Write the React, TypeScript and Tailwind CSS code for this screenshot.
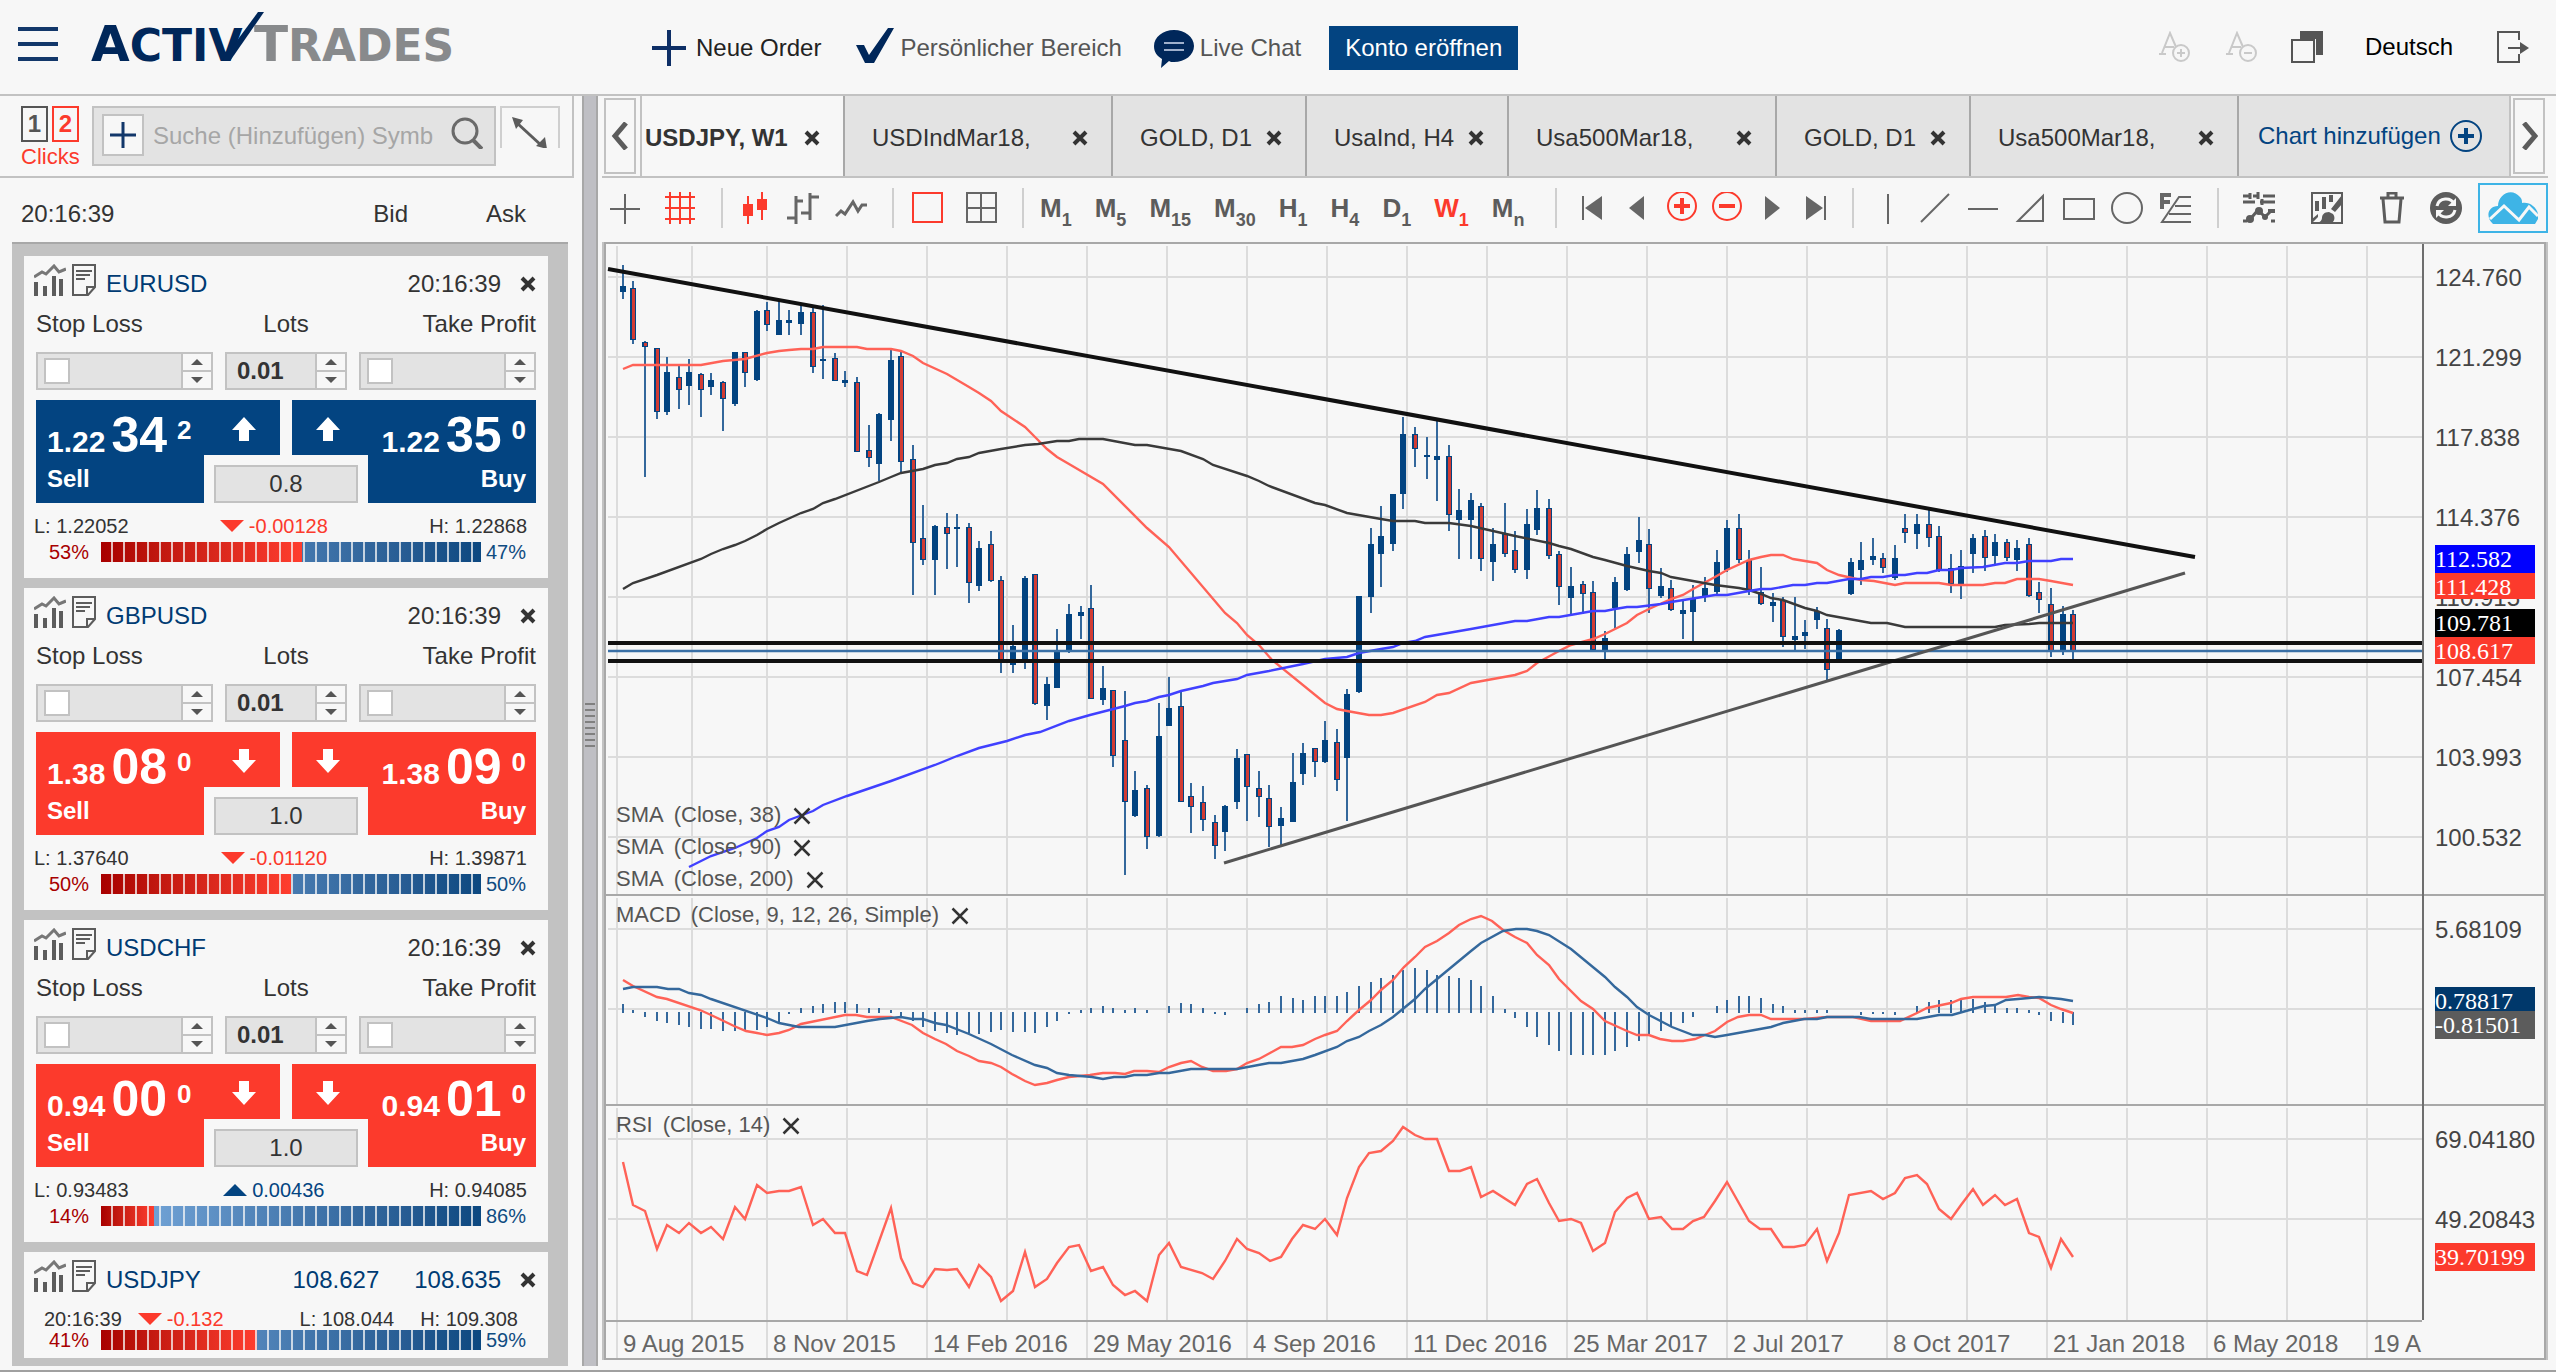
import type { ReactNode } from 'react'

type Pair = {
  symbol: string
  bid: [string, string, string]
  ask: [string, string, string]
  rising: boolean
  spread: string
  low: string
  high: string
  change: string
  changeUp: boolean
  sell: number
}

const pairs: Pair[] = [
  {
    symbol: 'EURUSD',
    bid: ['1.22', '34', '2'],
    ask: ['1.22', '35', '0'],
    rising: true,
    spread: '0.8',
    low: '1.22052',
    high: '1.22868',
    change: '-0.00128',
    changeUp: false,
    sell: 53
  },
  {
    symbol: 'GBPUSD',
    bid: ['1.38', '08', '0'],
    ask: ['1.38', '09', '0'],
    rising: false,
    spread: '1.0',
    low: '1.37640',
    high: '1.39871',
    change: '-0.01120',
    changeUp: false,
    sell: 50
  },
  {
    symbol: 'USDCHF',
    bid: ['0.94', '00', '0'],
    ask: ['0.94', '01', '0'],
    rising: false,
    spread: '1.0',
    low: '0.93483',
    high: '0.94085',
    change: '0.00436',
    changeUp: true,
    sell: 14
  }
]

const tabs = [
  { id: 1, title: 'USDJPY, W1', width: 'w-[205px]' },
  { id: 2, title: 'USDIndMar18,', width: 'w-[268px]' },
  { id: 3, title: 'GOLD, D1', width: 'w-[194px]' },
  { id: 4, title: 'UsaInd, H4', width: 'w-[202px]' },
  { id: 5, title: 'Usa500Mar18,', width: 'w-[268px]' },
  { id: 6, title: 'GOLD, D1', width: 'w-[194px]' },
  { id: 7, title: 'Usa500Mar18,', width: 'w-[268px]' }
]

const periods = [
  ['M', '1'],
  ['M', '5'],
  ['M', '15'],
  ['M', '30'],
  ['H', '1'],
  ['H', '4'],
  ['D', '1'],
  ['W', '1'],
  ['M', 'n']
]

// high, body top, body bottom, low, 1 = falling week
const candles = [
  [265, 286, 292, 299, 0], [281, 288, 340, 344, 1], [341, 342, 347, 477, 1], [348, 348, 412, 419, 1],
  [357, 372, 412, 415, 0], [365, 377, 390, 409, 1], [359, 372, 386, 405, 0], [373, 374, 390, 417, 1],
  [373, 380, 387, 395, 0], [381, 382, 399, 431, 1], [352, 352, 404, 406, 0], [352, 352, 373, 387, 1],
  [310, 311, 380, 381, 0], [302, 310, 325, 331, 1], [299, 320, 335, 335, 0], [310, 320, 323, 335, 0],
  [304, 312, 324, 335, 0], [307, 312, 367, 373, 1], [305, 359, 361, 379, 0], [353, 358, 381, 381, 1],
  [371, 380, 383, 387, 0], [377, 382, 452, 452, 1], [425, 450, 458, 467, 1], [413, 414, 464, 481, 0],
  [349, 360, 420, 441, 0], [352, 356, 462, 472, 1], [445, 459, 543, 595, 1], [505, 538, 560, 565, 1],
  [525, 526, 560, 595, 0], [513, 527, 534, 569, 1], [514, 527, 529, 567, 0], [523, 527, 583, 603, 1],
  [541, 548, 586, 591, 0], [531, 544, 581, 582, 1], [576, 580, 663, 673, 1], [625, 646, 665, 673, 0],
  [576, 578, 661, 669, 0], [574, 574, 704, 705, 1], [677, 684, 706, 720, 0], [629, 652, 688, 688, 0],
  [604, 614, 652, 653, 0], [606, 612, 616, 639, 0], [585, 608, 699, 699, 1], [666, 688, 700, 705, 0],
  [690, 690, 756, 767, 1], [691, 740, 802, 875, 1], [771, 790, 816, 817, 0], [785, 788, 837, 849, 1],
  [703, 736, 836, 837, 0], [677, 708, 726, 726, 0], [692, 706, 802, 802, 1], [783, 796, 807, 833, 1],
  [786, 802, 820, 831, 1], [815, 822, 846, 859, 1], [805, 806, 832, 851, 0], [749, 758, 802, 809, 0],
  [754, 754, 787, 821, 1], [771, 788, 797, 817, 1], [785, 798, 827, 847, 1], [807, 818, 826, 846, 0],
  [753, 782, 822, 822, 0], [743, 753, 774, 785, 0], [748, 748, 762, 777, 1], [721, 740, 762, 763, 0],
  [729, 742, 780, 791, 1], [689, 694, 758, 821, 0], [596, 596, 692, 693, 0], [528, 544, 597, 613, 0],
  [506, 536, 554, 587, 0], [494, 494, 544, 551, 0], [417, 434, 494, 509, 0], [427, 434, 449, 467, 1],
  [437, 455, 457, 479, 0], [420, 456, 460, 501, 0], [445, 456, 515, 531, 1], [489, 510, 520, 559, 0],
  [493, 500, 520, 559, 0], [503, 506, 559, 571, 1], [528, 544, 562, 581, 0], [503, 534, 554, 557, 1],
  [531, 550, 570, 573, 1], [509, 524, 570, 579, 0], [490, 508, 530, 535, 0], [499, 508, 556, 559, 1],
  [551, 554, 587, 605, 1], [567, 586, 598, 615, 0], [581, 584, 594, 614, 1], [581, 592, 650, 651, 1],
  [631, 638, 651, 661, 0], [577, 582, 608, 628, 0], [547, 554, 590, 591, 0], [517, 540, 552, 563, 0],
  [529, 544, 589, 613, 1], [568, 586, 596, 598, 0], [580, 588, 610, 611, 1], [600, 610, 614, 639, 0],
  [585, 598, 612, 644, 0], [577, 588, 597, 602, 0], [550, 562, 592, 594, 0], [520, 528, 570, 572, 0],
  [514, 528, 560, 563, 1], [550, 560, 591, 595, 1], [567, 592, 604, 605, 1], [593, 602, 606, 622, 0],
  [597, 600, 637, 647, 1], [597, 636, 640, 651, 0], [620, 632, 636, 649, 0], [607, 611, 620, 629, 0],
  [619, 628, 670, 681, 1], [629, 630, 661, 661, 0], [558, 562, 594, 595, 0], [542, 560, 570, 585, 0],
  [538, 556, 560, 565, 0], [553, 558, 568, 573, 1], [545, 558, 578, 580, 0], [514, 528, 533, 543, 1],
  [514, 524, 534, 549, 0], [509, 524, 538, 547, 1], [526, 536, 571, 572, 1], [554, 568, 584, 593, 1],
  [550, 566, 585, 599, 0], [534, 538, 554, 573, 0], [530, 536, 558, 571, 1], [534, 542, 556, 565, 0],
  [539, 542, 558, 561, 1], [540, 548, 560, 571, 0], [538, 544, 596, 597, 1], [582, 592, 600, 613, 1],
  [588, 604, 651, 657, 1], [606, 614, 651, 655, 0], [610, 614, 651, 662, 1]
]

const macdBars = [
  9, 3, -5, -9, -11, -13, -15, -17, -17, -19, -19, -18, -18, -15, -11, -2, 5, 7, 9, 11, 11, 9, 5, 5, 3, -4,
  -9, -15, -19, -21, -23, -21, -22, -20, -18, -20, -20, -21, -15, -9, -2, 3, 5, 7, 5, 3, 5, 3, 0, 7, 10, 9,
  5, -2, -3, 0, 5, 9, 11, 17, 15, 13, 17, 17, 17, 21, 27, 31, 35, 38, 43, 45, 43, 38, 37, 35, 33, 27, 17, 4,
  -6, -15, -25, -33, -39, -43, -43, -43, -43, -39, -35, -29, -22, -19, -15, -11, -5, 0, 7, 13, 17, 17, 15, 9,
  7, 3, 3, 3, 3, 0, 0, -3, -2, -2, -3, 0, 7, 11, 13, 13, 14, 14, 11, 9, 5, 5, 3, -3, -9, -11, -13
]

const sma38 =
  '623,369 633,365 701,365 723,361 745,359 767,353 779,351 789,350 801,349 813,349 823,347 857,347 867,349 891,349 901,351 913,356 923,363 947,374 969,387 979,393 991,401 1001,411 1025,427 1035,437 1047,449 1057,457 1069,464 1103,484 1147,528 1169,547 1225,613 1237,623 1247,635 1259,645 1272,660 1325,703 1337,709 1347,711 1369,715 1381,715 1393,713 1425,702 1437,695 1449,693 1471,683 1515,675 1527,671 1537,663 1559,651 1571,645 1593,639 1605,634 1627,623 1637,615 1649,609 1671,599 1683,595 1693,589 1715,577 1727,570 1749,560 1761,557 1771,555 1783,555 1793,559 1817,563 1827,570 1839,575 1861,580 1874,581 1895,585 1905,583 1939,583 1951,585 1983,585 1995,583 2005,583 2017,579 2039,579 2051,581 2073,585'
const sma90 =
  '623,589 633,583 657,575 701,559 711,554 723,549 735,545 745,541 757,535 767,529 779,523 801,513 813,509 823,503 835,499 879,482 891,477 901,473 923,469 935,465 947,463 957,459 969,457 979,453 1001,449 1025,445 1038,444 1057,441 1069,441 1079,439 1103,439 1135,445 1147,445 1181,451 1203,459 1213,465 1247,476 1259,481 1269,486 1315,503 1325,505 1347,513 1381,519 1393,521 1415,521 1425,523 1449,523 1471,526 1493,531 1515,536 1549,543 1559,546 1571,549 1593,557 1605,560 1627,566 1649,571 1661,573 1671,577 1715,585 1739,588 1749,590 1761,594 1771,598 1783,600 1805,608 1817,611 1827,615 1871,623 1887,623 1905,627 1995,627 2005,625 2029,624 2039,623 2073,623'
const sma200 =
  '689,867 711,856 735,848 757,838 767,831 779,827 789,820 813,811 823,805 847,796 891,781 935,765 957,756 979,748 991,745 1007,741 1025,735 1040,732 1069,721 1090,715 1125,706 1135,703 1147,701 1159,697 1169,695 1181,691 1203,686 1213,683 1237,679 1247,675 1269,671 1303,664 1325,659 1347,657 1359,653 1381,649 1393,647 1403,643 1415,641 1425,637 1471,629 1515,621 1527,621 1549,617 1559,617 1593,611 1605,611 1615,609 1627,607 1637,607 1661,604 1671,602 1715,595 1727,595 1749,591 1761,589 1771,589 1793,585 1805,585 1817,583 1827,583 1849,579 1861,579 1871,577 1883,577 1895,575 1905,575 1917,573 1927,573 1939,570 1951,570 1961,568 1983,567 2005,563 2017,563 2029,561 2051,561 2061,559 2073,559'
const macdFast =
  '623,980 633,986 657,997 667,999 700,1010 711,1015 734,1026 746,1031 757,1033 767,1035 779,1033 789,1030 801,1024 845,1015 856,1015 867,1017 891,1017 912,1025 923,1033 935,1039 946,1044 957,1051 969,1056 979,1061 991,1063 1001,1067 1012,1074 1025,1081 1035,1085 1047,1083 1057,1080 1069,1077 1090,1075 1103,1073 1115,1073 1125,1074 1134,1071 1147,1071 1159,1072 1169,1067 1181,1063 1191,1061 1202,1067 1213,1071 1226,1071 1237,1069 1247,1063 1259,1059 1270,1053 1281,1047 1292,1047 1303,1045 1315,1039 1325,1035 1337,1031 1347,1021 1359,1010 1371,1000 1381,990 1393,980 1404,967 1415,957 1425,947 1437,941 1449,933 1459,925 1471,919 1481,916 1492,921 1503,930 1515,937 1527,943 1537,955 1549,965 1559,979 1581,1001 1593,1009 1605,1021 1627,1031 1637,1035 1649,1035 1660,1039 1672,1041 1683,1041 1695,1039 1705,1035 1715,1031 1727,1022 1738,1017 1749,1015 1761,1015 1771,1019 1804,1019 1827,1017 1853,1017 1871,1021 1900,1021 1917,1013 1927,1008 1951,1003 1961,999 1973,997 2006,997 2018,995 2029,997 2039,998 2051,1005 2061,1009 2073,1013'
const macdSlow =
  '623,989 633,987 657,987 668,989 679,989 689,993 701,995 711,999 767,1018 779,1023 789,1025 799,1027 835,1027 867,1021 880,1019 901,1017 912,1019 923,1019 935,1023 946,1025 969,1034 991,1044 1012,1055 1035,1065 1047,1068 1057,1073 1069,1075 1092,1077 1103,1079 1114,1077 1125,1077 1134,1075 1147,1075 1159,1073 1169,1073 1191,1069 1237,1069 1269,1063 1281,1063 1303,1059 1315,1055 1337,1047 1347,1041 1359,1037 1369,1031 1381,1025 1393,1017 1404,1008 1415,999 1425,989 1471,951 1481,943 1503,931 1516,929 1527,929 1537,931 1549,935 1571,949 1605,977 1615,987 1627,997 1637,1007 1649,1015 1672,1027 1693,1035 1705,1035 1715,1037 1727,1035 1771,1027 1783,1023 1804,1019 1817,1019 1827,1017 1859,1017 1871,1019 1917,1019 1939,1015 1952,1015 1973,1009 1984,1006 1995,1005 2006,1000 2018,999 2029,998 2039,997 2051,998 2061,999 2073,1001'
const rsi =
  '623,1162 633,1205 645,1211 657,1249 667,1225 679,1233 689,1223 701,1233 711,1227 723,1239 735,1207 745,1219 757,1185 767,1193 779,1191 789,1191 801,1187 813,1225 823,1219 835,1233 845,1233 857,1271 867,1275 891,1208 901,1258 913,1283 923,1287 935,1269 947,1270 957,1269 969,1287 979,1265 991,1277 1001,1301 1013,1291 1025,1252 1035,1287 1047,1279 1057,1263 1069,1247 1079,1245 1091,1271 1103,1267 1113,1285 1125,1295 1135,1291 1147,1301 1159,1255 1169,1243 1181,1267 1202,1273 1213,1279 1225,1261 1237,1239 1247,1249 1259,1253 1270,1261 1281,1257 1292,1239 1303,1225 1315,1229 1325,1219 1337,1235 1347,1198 1359,1167 1369,1153 1381,1151 1393,1141 1403,1127 1415,1135 1425,1139 1437,1139 1449,1171 1460,1171 1471,1167 1481,1197 1493,1191 1515,1205 1527,1184 1537,1179 1549,1203 1559,1221 1571,1219 1581,1223 1593,1251 1605,1243 1615,1212 1627,1198 1637,1193 1649,1219 1661,1217 1672,1229 1683,1229 1693,1221 1704,1217 1715,1201 1727,1182 1749,1221 1760,1229 1771,1229 1783,1247 1794,1247 1805,1245 1817,1229 1827,1261 1839,1233 1849,1195 1871,1191 1883,1199 1895,1193 1905,1178 1917,1175 1927,1184 1939,1209 1951,1219 1961,1205 1973,1189 1983,1205 1995,1195 2005,1205 2017,1199 2029,1233 2039,1237 2051,1268 2061,1239 2073,1257'

const priceTicks = ['124.760', '121.299', '117.838', '114.376', '110.915', '107.454', '103.993', '100.532']

const lowerTicks = [
  { label: '5.68109', y: 929 },
  { label: '69.04180', y: 1139 },
  { label: '49.20843', y: 1219 }
]

const priceTags = [
  { label: '112.582', y: 545, height: 28, fill: '#0000ff' },
  { label: '111.428', y: 573, height: 26, fill: '#fc3a2c' },
  { label: '109.781', y: 609, height: 28, fill: '#000000' },
  { label: '108.617', y: 637, height: 27, fill: '#fc3a2c' },
  { label: '0.78817', y: 987, height: 26, fill: '#00386b' },
  { label: '-0.81501', y: 1011, height: 28, fill: '#5c5c5c' },
  { label: '39.70199', y: 1243, height: 28, fill: '#fc3a2c' }
]

const dates = [
  '9 Aug 2015',
  '8 Nov 2015',
  '14 Feb 2016',
  '29 May 2016',
  '4 Sep 2016',
  '11 Dec 2016',
  '25 Mar 2017',
  '2 Jul 2017',
  '8 Oct 2017',
  '21 Jan 2018',
  '6 May 2018',
  '19 Aug 2018'
]

const gridX = [617, 692, 767, ...Array.from({ length: 20 }, (_, i) => 847 + i * 80)]
const dateX = [617, 767, ...Array.from({ length: 10 }, (_, i) => 927 + i * 160)]

// weeks snap to even pixels so that the wicks stay sharp
const weekX = (i: number) => 623 + 2 * Math.round(i * 5.58 - 0.24)

const Cross = ({ className, width = 4 }: { className: string; width?: number }) => (
  <svg viewBox="0 0 16 16" className={className} fill="none" stroke="#333" strokeWidth={width}>
    <path d="M2 2l12 12M14 2L2 14" />
  </svg>
)

const Logo = () => (
  <svg viewBox="0 0 370 66" className="mb-[4px] ml-[33px] h-[66px] w-[370px]" role="img" aria-label="ActivTrades">
    <g fontFamily="'DejaVu Sans', sans-serif" fontWeight="bold">
      <text x="0" y="49" fontSize="50" fill="#00275a">
        A<tspan fontSize="44">CTIV</tspan>
      </text>
      <text x="163" y="49" fontSize="50" fill="#888a8c">
        T<tspan fontSize="44">RADES</tspan>
      </text>
    </g>
    <path d="M131 49h8L173 0h-6z" fill="#00275a" />
  </svg>
)

const Tool = ({ label, className = '', children }: { label: string; className?: string; children: ReactNode }) => (
  <button aria-label={label} className={`flex size-8 shrink-0 items-center justify-center ${className}`}>
    <svg viewBox="0 0 32 32" className="size-8" fill="none" stroke="currentColor" strokeWidth="2">
      {children}
    </svg>
  </button>
)

const Separator = () => <div className="h-[40px] w-[2px] shrink-0 bg-[#cfcfcf]" />

const Header = () => (
  <header className="flex h-[96px] items-center border-b-2 border-[#c2c2c2] pl-[18px] pr-[27px]">
    <button aria-label="Menü" className="mb-[6px] flex h-[34px] w-[40px] flex-col justify-between">
      <span className="h-[4px] w-full bg-[#12376a]" />
      <span className="h-[4px] w-full bg-[#12376a]" />
      <span className="h-[4px] w-full bg-[#12376a]" />
    </button>
    <Logo />
    <nav className="ml-[191px] mt-[2px] flex h-[44px] items-center text-[24px] text-[#555]">
      <a href="#order" className="flex items-center gap-[10px] text-[#222]">
        <svg viewBox="0 0 34 36" className="h-[36px] w-[34px]" fill="none" stroke="#0e2f66" strokeWidth="4">
          <path d="M17 0v36M0 18h34" />
        </svg>
        Neue Order
      </a>
      <a href="#konto" className="ml-[35px] flex items-center gap-[6px]">
        <svg viewBox="0 0 38 36" className="mb-[4px] h-[36px] w-[38px]" fill="#00275a">
          <path d="M0 17h8l5 10L32 0h6L18 35h-9z" />
        </svg>
        Persönlicher Bereich
      </a>
      <a href="#chat" className="ml-[32px] flex items-center gap-[6px]">
        <svg viewBox="0 0 40 38" className="mt-[2px] h-[38px] w-[40px]">
          <path d="M20 0c11 0 20 7 20 16s-9 16-20 16c-2 0-4 0-5-1L7 38l1-9C3 26 0 22 0 16 0 7 9 0 20 0z" fill="#00275a" />
          <path d="M10 13h20M10 20h20" stroke="#9fb0cc" strokeWidth="2" />
        </svg>
        Live Chat
      </a>
      <button className="ml-[28px] h-[44px] w-[189px] bg-[#034481] text-white">Konto eröffnen</button>
    </nav>
    <div className="ml-auto flex h-[44px] items-center text-[#555]">
      <Tool label="Schrift größer" className="text-[#c9c9c9]">
        <path d="M3 22L11 2l6 14M6 16h9M0 23h7" />
        <circle cx="22" cy="22" r="8" />
        <path d="M18 22h8M22 18v8" />
      </Tool>
      <Tool label="Schrift kleiner" className="ml-[35px] text-[#c9c9c9]">
        <path d="M3 22L11 2l6 14M6 16h9M0 23h7" />
        <circle cx="22" cy="22" r="8" />
        <path d="M18 22h8" />
      </Tool>
      <Tool label="Fenster" className="ml-[33px]">
        <path d="M9 0h23v24h-7V8H9z" fill="currentColor" stroke="none" />
        <rect x="1" y="9" width="22" height="22" />
      </Tool>
      <select aria-label="Sprache" className="ml-[42px] w-[96px] appearance-none text-[24px] text-black">
        <option>Deutsch</option>
      </select>
      <Tool label="Abmelden" className="ml-[36px]">
        <path d="M22 9V1H1v30h21v-8M11 17h15" />
        <path d="M23 11l9 6-9 6z" fill="currentColor" stroke="none" />
      </Tool>
    </div>
  </header>
)

const SymbolIcons = () => (
  <>
    <svg viewBox="0 0 32 32" className="size-8" fill="none" stroke="#5c5c5c" strokeWidth="4">
      <path d="M2 18v14M11 22v10M20 12v20M27 15v17" />
      <path d="M0 13l8-5 4 2 8-8 5 6 7-3" strokeWidth="3" stroke="#777" />
    </svg>
    <svg viewBox="0 0 24 32" className="ml-[6px] h-8 w-6" fill="none" stroke="#5c5c5c" strokeWidth="2">
      <path d="M1 1h22v22l-7 8H1z" />
      <path d="M15 31v-8h8M4 7h16M4 11h14M4 15h9" />
    </svg>
  </>
)

const Spinner = ({ label }: { label: string }) => (
  <div className="flex w-[30px] shrink-0 flex-col border-l-2 border-[#c2c2c2] bg-[#f7f7f7]">
    <button aria-label={`${label} erhöhen`} className="flex flex-1 items-center justify-center border-b-2 border-[#c2c2c2]">
      <svg viewBox="0 0 12 6" className="h-[6px] w-[12px]" fill="#555">
        <path d="M0 6l6-6 6 6z" />
      </svg>
    </button>
    <button aria-label={`${label} verringern`} className="flex flex-1 items-center justify-center">
      <svg viewBox="0 0 12 6" className="h-[6px] w-[12px]" fill="#555">
        <path d="M0 0h12L6 6z" />
      </svg>
    </button>
  </div>
)

const LimitField = ({ id, label }: { id: string; label: string }) => (
  <div className="flex h-[38px] w-[177px] border-2 border-[#c2c2c2] bg-[#e3e3e3]">
    <input
      type="checkbox"
      aria-label={`${label} aktiv`}
      className="ml-[6px] mt-[4px] size-[26px] shrink-0 appearance-none border-2 border-[#c2c2c2] bg-white"
    />
    <input id={id} type="text" className="min-w-0 flex-1 px-2 text-[24px]" />
    <Spinner label={label} />
  </div>
)

const Price = ({ parts }: { parts: [string, string, string] }) => (
  <>
    <span className="text-[30px] leading-none">{parts[0]}</span>
    <span className="ml-[6px] text-[50px] leading-none">{parts[1]}</span>
    <span className="ml-[10px] mt-[7px] self-start text-[26px] leading-none">{parts[2]}</span>
  </>
)

const Arrow = ({ up, className }: { up: boolean; className: string }) => (
  <svg viewBox="0 0 24 24" className={`mt-[7px] size-6 self-start ${className}`} fill="#fff">
    <path d={up ? 'M12 0l12 13h-7v11H7V13H0z' : 'M12 24L0 11h7V0h10v11h7z'} />
  </svg>
)

const Change = ({ up, value }: { up: boolean; value: string }) => (
  <span className={`flex items-center gap-[5px] ${up ? 'text-[#034481]' : 'text-[#fc3a2c]'}`}>
    <svg viewBox="0 0 24 12" className="h-[12px] w-[24px]" fill="currentColor">
      <path d={up ? 'M0 12L12 0l12 12z' : 'M0 0h24L12 12z'} />
    </svg>
    {value}
  </span>
)

const Sentiment = ({ sell }: { sell: number }) => (
  <div className="flex h-[20px] items-center pl-[13px] text-[20px] leading-[20px]">
    <span className="w-[40px] text-[#a80000]">{sell}%</span>
    <div className="relative ml-[12px] h-[20px] w-[380px] bg-linear-to-r from-[#7fb0e2] to-[#0c4880]">
      <div className="h-full bg-linear-to-r from-[#a80000] to-[#ff3d2e]" style={{ width: `${sell}%` }} />
      <div className="absolute inset-0 bg-[repeating-linear-gradient(90deg,transparent_0_10px,rgba(247,247,247,0.75)_10px_12px)]" />
    </div>
    <span className="ml-[5px] text-[#0f4c81]">{100 - sell}%</span>
  </div>
)

const PairCard = ({ pair }: { pair: Pair }) => {
  const tone = pair.rising ? 'bg-[#034481]' : 'bg-[#fc3a2c]'
  return (
    <article className="bg-[#f7f7f7] px-[12px] pb-[16px] pt-[8px] text-[24px] text-[#333]">
      <div className="-ml-[2px] flex h-[40px] items-start leading-[40px]">
        <SymbolIcons />
        <h2 className="ml-[10px] text-[#003b73]">{pair.symbol}</h2>
        <span className="ml-auto">20:16:39</span>
        <button aria-label={`${pair.symbol} entfernen`} className="ml-[19px] mt-[12px]">
          <Cross className="size-[16px]" />
        </button>
      </div>
      <div className="flex h-[40px] justify-between leading-[40px]">
        <label htmlFor={`${pair.symbol}-sl`} className="w-[177px]">
          Stop Loss
        </label>
        <label htmlFor={`${pair.symbol}-lots`}>Lots</label>
        <label htmlFor={`${pair.symbol}-tp`} className="w-[177px] text-right">
          Take Profit
        </label>
      </div>
      <div className="mt-[8px] flex justify-between">
        <LimitField id={`${pair.symbol}-sl`} label="Stop Loss" />
        <div className="flex h-[38px] w-[122px] border-2 border-[#c2c2c2] bg-[#e3e3e3]">
          <input
            id={`${pair.symbol}-lots`}
            type="text"
            defaultValue="0.01"
            className="min-w-0 flex-1 pl-[10px] text-[24px] font-bold"
          />
          <Spinner label="Lots" />
        </div>
        <LimitField id={`${pair.symbol}-tp`} label="Take Profit" />
      </div>
      <div className="relative mt-[10px] flex justify-between font-bold text-white">
        <button
          className={`h-[103px] w-[244px] pl-[11px] pt-[10px] text-left [clip-path:polygon(0_0,100%_0,100%_55px,168px_55px,168px_100%,0_100%)] ${tone}`}
        >
          <span className="flex h-[50px] items-baseline">
            <Price parts={pair.bid} />
            <Arrow up={pair.rising} className="ml-auto mr-[24px]" />
          </span>
          <span className="block h-[43px] leading-[38px]">Sell</span>
        </button>
        <output className="absolute bottom-0 left-[178px] flex h-[38px] w-[144px] items-center justify-center border-2 border-[#c2c2c2] bg-[#e3e3e3] font-normal text-[#333]">
          {pair.spread}
        </output>
        <button
          className={`h-[103px] w-[244px] pr-[10px] pt-[10px] text-right [clip-path:polygon(0_0,100%_0,100%_100%,76px_100%,76px_55px,0_55px)] ${tone}`}
        >
          <span className="flex h-[50px] items-baseline">
            <Arrow up={pair.rising} className="ml-[24px] mr-auto" />
            <Price parts={pair.ask} />
          </span>
          <span className="block h-[43px] leading-[38px]">Buy</span>
        </button>
      </div>
      <div className="mt-[10px] flex justify-between pr-[9px] text-[20px] leading-[26px]">
        <span className="-ml-[2px]">L: {pair.low}</span>
        <div className="pr-[10px]">
          <Change up={pair.changeUp} value={pair.change} />
        </div>
        <span>H: {pair.high}</span>
      </div>
      <div className="mt-[3px]">
        <Sentiment sell={pair.sell} />
      </div>
    </article>
  )
}

const Sidebar = () => (
  <aside className="flex w-[582px] shrink-0 flex-col">
    <div className="flex h-[82px] w-[574px] border-b-2 border-r-2 border-[#c2c2c2] pl-[21px] pt-[10px]">
      <div className="w-[60px] text-[22px] leading-[30px] text-[#fc3a2c]">
        <div className="flex gap-[4px] text-[24px] font-bold">
          <button className="h-[36px] w-[27px] border-2 border-[#555] text-[#555]">1</button>
          <button className="h-[36px] w-[27px] border-2 border-[#fc3a2c]">2</button>
        </div>
        Clicks
      </div>
      <div className="ml-[11px] flex h-[60px] w-[404px] border-2 border-[#c2c2c2] bg-[#e3e3e3] p-[6px]">
        <button aria-label="Symbol hinzufügen" className="ml-[2px] h-[42px] w-[42px] border-2 border-[#c2c2c2] bg-[#f7f7f7] p-[6px]">
          <svg viewBox="0 0 26 26" className="size-[26px]" fill="none" stroke="#12376a" strokeWidth="3">
            <path d="M13 0v26M0 13h26" />
          </svg>
        </button>
        <input
          type="text"
          aria-label="Symbol suchen"
          placeholder="Suche (Hinzufügen) Symb"
          className="ml-[9px] h-[44px] w-[294px] text-[24px] placeholder:text-[#a6a6a6]"
        />
        <button aria-label="Suchen" className="mb-[7px] ml-[4px]">
          <svg viewBox="0 0 32 32" className="size-8" fill="none" stroke="#6a6a6a" strokeWidth="3">
            <circle cx="14" cy="14" r="12" />
            <path d="M22 23l9 9" strokeWidth="4" />
          </svg>
        </button>
      </div>
      <button aria-label="Liste vergrößern" className="ml-[4px] h-[42px] w-[60px] border-x-2 border-t-2 border-[#cfcfcf]">
        <svg viewBox="0 0 56 40" className="h-[40px] w-[56px]" fill="#5c5c5c">
          <path d="M15 15l25 23" stroke="#5c5c5c" strokeWidth="3" />
          <path d="M10 9l11 3-7 9zM45 41l-11-3 9-9z" />
        </svg>
      </button>
    </div>
    <div className="flex h-[64px] items-center pb-px pl-[21px] pt-[8px] text-[24px] text-[#333]">
      <span>20:16:39</span>
      <span className="ml-auto">Bid</span>
      <span className="ml-[78px] mr-[56px]">Ask</span>
    </div>
    <div className="ml-[12px] flex w-[556px] flex-col gap-[10px] border-t-2 border-[#a8a8a8] bg-[#c2c2c2] pb-[8px] pl-[12px] pr-[20px] pt-[12px]">
      {pairs.map((pair) => (
        <PairCard key={pair.symbol} pair={pair} />
      ))}
      <article className="bg-[#f7f7f7] px-[12px] pb-[8px] pt-[8px] text-[24px] text-[#333]">
        <div className="-ml-[2px] flex h-[40px] items-start leading-[40px] text-[#003b73]">
          <SymbolIcons />
          <h2 className="ml-[10px]">USDJPY</h2>
          <span className="ml-auto">108.627</span>
          <span className="ml-[35px]">108.635</span>
          <button aria-label="USDJPY entfernen" className="ml-[19px] mt-[12px]">
            <Cross className="size-[16px]" />
          </button>
        </div>
        <div className="mt-[8px] flex h-[22px] pl-[8px] text-[20px] leading-[22px]">
          <span className="mr-[16px]">20:16:39</span>
          <Change up={false} value="-0.132" />
          <span className="ml-auto">L: 108.044</span>
          <span className="ml-[26px] mr-[18px]">H: 109.308</span>
        </div>
        <Sentiment sell={41} />
      </article>
    </div>
  </aside>
)

const TabBar = () => (
  <div className="flex h-[82px] border-b-2 border-[#c2c2c2] pl-[2px] pr-[3px]">
    <button
      aria-label="Vorherige Charts"
      className="mr-[4px] mt-[2px] flex h-[76px] w-[32px] shrink-0 items-center justify-center border-2 border-[#c2c2c2]"
    >
      <svg viewBox="0 0 18 28" className="h-[28px] w-[18px]" fill="none" stroke="#5c5c5c" strokeWidth="5">
        <path d="M15 1L4 14l11 13" />
      </svg>
    </button>
    {tabs.map((tab, index) => (
      <div
        key={tab.id}
        className={`flex shrink-0 items-center justify-between border-r-2 border-r-[#a8a8a8] pr-[23px] pt-[4px] text-[24px] text-[#333] ${tab.width} ${
          index === 0 ? 'border-l-2 border-l-[#c2c2c2] pl-[3px] font-bold' : 'bg-[#e3e3e3] pl-[27px]'
        }`}
      >
        <button>{tab.title}</button>
        <button aria-label={`${tab.title} schließen`}>
          <Cross className="size-[16px]" />
        </button>
      </div>
    ))}
    <button className="mr-[2px] flex min-w-0 flex-1 items-center gap-[8px] border-r-2 border-[#c2c2c2] bg-[#e3e3e3] pl-[19px] text-[24px] whitespace-nowrap text-[#034481]">
      Chart hinzufügen
      <svg viewBox="0 0 34 34" className="size-[34px] shrink-0" fill="none" stroke="#034481" strokeWidth="2">
        <circle cx="17" cy="17" r="15" />
        <path d="M9 17h16M17 9v16" strokeWidth="4" />
      </svg>
    </button>
    <button
      aria-label="Weitere Charts"
      className="mt-[2px] flex h-[76px] w-[32px] shrink-0 items-center justify-center border-2 border-[#c2c2c2]"
    >
      <svg viewBox="0 0 18 28" className="h-[28px] w-[18px]" fill="none" stroke="#5c5c5c" strokeWidth="5">
        <path d="M4 1l11 13L4 27" />
      </svg>
    </button>
  </div>
)

const Toolbar = () => (
  <div className="flex h-[64px] items-center pb-[4px] text-[#666]">
    <div className="flex gap-[23px] pl-[7px] pr-[25px]">
      <Tool label="Fadenkreuz">
        <path d="M16 2v30M1 17h30" />
      </Tool>
      <Tool label="Raster" className="text-[#fc3a2c]">
        <path d="M6 0v32M16 0v32M26 0v32M1 5h30M1 16h30M1 27h30" />
      </Tool>
    </div>
    <Separator />
    <div className="flex gap-[16px] pl-[16px] pr-[25px]">
      <Tool label="Kerzen" className="text-[#fc3a2c]">
        <path d="M9 4v28M23 0v28" />
        <path d="M4 12h10v12H4zM18 7h10v11H18z" fill="currentColor" stroke="none" />
      </Tool>
      <Tool label="Balken">
        <path d="M9 4v28M0 26h9M9 9h7M23 1v27M23 5h9M14 21h9" strokeWidth="3" />
      </Tool>
      <Tool label="Linie">
        <path d="M1 24l5-5 4 3 8-12 5 9 4-6h5" strokeWidth="3" />
      </Tool>
    </div>
    <Separator />
    <div className="flex gap-[22px] pl-[17px] pr-[25px]">
      <Tool label="Einzelansicht" className="text-[#fc3a2c]">
        <rect x="2" y="1" width="29" height="29" />
      </Tool>
      <Tool label="Mehrfachansicht">
        <path d="M2 1h29v29H2zM2 16h29M16 1v29" />
      </Tool>
    </div>
    <Separator />
    <div className="flex gap-[23px] pl-[16px] pr-[31px] font-bold text-[#5c5c5c]">
      {periods.map(([unit, count]) => (
        <button
          key={unit + count}
          className={`flex h-[32px] items-start text-[26px] leading-[32px] ${unit === 'W' ? 'text-[#fc3a2c]' : ''}`}
        >
          {unit}
          <span className="pt-[12px] text-[18px]">{count}</span>
        </button>
      ))}
    </div>
    <Separator />
    <div className="flex gap-[13px] pl-[19px] pr-[19px]">
      <Tool label="Anfang">
        <path d="M7 4v24" />
        <path d="M9 16L26 4v24z" fill="currentColor" stroke="none" />
      </Tool>
      <Tool label="Zurück">
        <path d="M8 16L23 4v24z" fill="currentColor" stroke="none" />
      </Tool>
      <Tool label="Vergrößern" className="text-[#fc3a2c]">
        <circle cx="16" cy="14" r="14" />
        <path d="M8 14h16M16 6v16" strokeWidth="4" />
      </Tool>
      <Tool label="Verkleinern" className="text-[#fc3a2c]">
        <circle cx="16" cy="14" r="14" />
        <path d="M8 14h16" strokeWidth="4" />
      </Tool>
      <Tool label="Weiter">
        <path d="M24 16L9 4v24z" fill="currentColor" stroke="none" />
      </Tool>
      <Tool label="Ende">
        <path d="M24 4v24" />
        <path d="M22 16L5 4v24z" fill="currentColor" stroke="none" />
      </Tool>
    </div>
    <Separator />
    <div className="flex gap-[16px] pl-[17px] pr-[26px]">
      <Tool label="Vertikale Linie">
        <path d="M17 2v30" />
      </Tool>
      <Tool label="Trendlinie">
        <path d="M2 30L30 2" />
      </Tool>
      <Tool label="Horizontale Linie">
        <path d="M1 17h30" />
      </Tool>
      <Tool label="Dreieck">
        <path d="M3 29L28 4v25z" />
      </Tool>
      <Tool label="Rechteck">
        <rect x="1" y="7" width="30" height="20" />
      </Tool>
      <Tool label="Ellipse">
        <circle cx="16" cy="16" r="15" />
      </Tool>
      <Tool label="Fibonacci">
        <path d="M3 17V3h9M3 10h8" strokeWidth="4" />
        <path d="M32 5H20L3 30h29M32 14H16M32 22H10" />
      </Tool>
    </div>
    <Separator />
    <div className="ml-auto flex items-center text-[#5c5c5c]">
      <Tool label="Indikatoren" className="mr-[36px]">
        <path d="M0 4h6M10 4h4M20 4h12M0 10h12M17 10h15M7 1v6M15 0v7M19 7v6" strokeWidth="3" />
        <path d="M0 29h4M28 29h4M4 28l5-3 6-7 7 7 6-6" strokeWidth="3" />
        <g fill="currentColor" stroke="none">
          <circle cx="7" cy="27" r="4" />
          <circle cx="16" cy="19" r="4" />
          <circle cx="22" cy="25" r="3" />
          <path d="M25 17h7v4h-7z" />
        </g>
      </Tool>
      <Tool label="Vorlagen" className="mr-[33px]">
        <path d="M1 1h30v30H1z" />
        <path d="M6 9v10M13 5v12M20 3v7" strokeWidth="4" />
        <path d="M31 3L20 17l4 3 7-8zM18 20c-5 0-7 3-7 6 0 2-2 4-4 5h12c4 0 6-5 3-9zM1 27l6-5v3l-6 6z" fill="currentColor" stroke="none" />
      </Tool>
      <Tool label="Löschen" className="mr-[22px]">
        <path d="M4 6h24M12 5V1h8v4M7 7l2 23h14l2-23" strokeWidth="3" />
      </Tool>
      <Tool label="Aktualisieren" className="mr-[16px]">
        <circle cx="16" cy="16" r="16" fill="currentColor" stroke="none" />
        <path d="M7 14c2-9 14-9 17-2M25 18c-2 9-14 9-17 2" stroke="#f7f7f7" strokeWidth="3" />
        <path d="M26 6v8h-8zM6 26v-8h8z" fill="#f7f7f7" stroke="none" />
      </Tool>
      <button aria-label="Cloud" className="flex h-[50px] w-[70px] items-center justify-center border-2 border-[#3eb4e6]">
        <svg viewBox="0 0 50 32" className="h-[32px] w-[50px]">
          <path d="M5 32C-3 25 0 14 10 14 10 2 24-5 32 5c2 2 2 4 2 6 8-2 18 6 16 16l-3 5z" fill="#3eb4e6" />
          <path d="M2 27l14-13 15 14 10-13 9 9" fill="none" stroke="#f7f7f7" strokeWidth="3" />
        </svg>
      </button>
    </div>
  </div>
)

const IndicatorLabel = ({ name, params }: { name: string; params: string }) => (
  <div className="flex h-[32px] items-center text-[22px] leading-[32px] text-[#555]">
    {name}
    <span className="ml-[10px]">{params}</span>
    <button aria-label={`${name} ${params} entfernen`} className="ml-[11px] mt-[2px]">
      <Cross className="size-[20px]" width={2} />
    </button>
  </div>
)

const Chart = () => (
  <div className="border-x-2 border-[#c2c2c2]">
    <div className="relative border-2 border-[#a8a8a8]">
      <svg viewBox="606 244 1938 1114" className="block h-auto w-full" fontFamily="'Liberation Sans', Arial, sans-serif">
        <defs>
          <clipPath id="plot">
            <rect x="606" y="244" width="1816" height="1114" />
          </clipPath>
        </defs>

        {/* Grid */}
        <g stroke="#dcdcdc" strokeWidth="2">
          {gridX.map((x) => (
            <path key={x} d={`M${x} 246V894M${x} 898V1104M${x} 1108V1320`} />
          ))}
          {dateX.map((x) => (
            <path key={x} d={`M${x} 1322v36`} />
          ))}
          {priceTicks.map((tick, i) => (
            <path key={tick} d={`M608 ${277 + i * 80}H2422`} />
          ))}
          <path d="M608 929H2422M608 1009H2422M608 1139H2422M608 1219H2422" />
        </g>

        {/* Price */}
        {candles.map(([high, top, bottom, low, falling], i) => {
          const x = weekX(i)
          const height = Math.max(bottom - top, 2)
          return (
            <g key={x}>
              <path d={`M${x} ${high}V${low}`} stroke="#34689c" strokeWidth="2" />
              <rect x={x - 3} y={top} width="6" height={height} fill="#034481" />
              {falling === 1 && height > 3 && <rect x={x - 1} y={top + 1} width="3" height={height - 2} fill="#d23c34" />}
            </g>
          )
        })}
        <g fill="none" strokeWidth="2.4">
          <polyline points={sma38} stroke="#ff6257" />
          <polyline points={sma90} stroke="#3a3a3a" />
          <polyline points={sma200} stroke="#4040ff" />
          <path d="M608 651H2422" stroke="#3a70a6" />
          <path d="M1224 863L2185 573" stroke="#555" strokeWidth="3" />
          <path d="M608 269L2195 557M608 643H2422M608 661H2422" stroke="#111" strokeWidth="4" />
        </g>

        {/* MACD */}
        {macdBars.map((value, i) => (
          <rect
            key={i}
            x={weekX(i) - 1}
            y={value > 0 ? 1013 - value : 1012}
            width="2"
            height={Math.abs(value)}
            fill="#34689c"
          />
        ))}
        <g fill="none" strokeWidth="2.4">
          <polyline points={macdFast} stroke="#ff6257" />
          <polyline points={macdSlow} stroke="#34689c" />
          <polyline points={rsi} stroke="#ff6257" />
        </g>

        {/* Axes */}
        <g stroke="#a8a8a8" strokeWidth="2">
          <path d="M606 895H2544M606 1105H2544M606 1321H2422" />
          <path d="M2423 244V1320" stroke="#6e6e6e" />
        </g>
        <g fontSize="24" fill="#444">
          {priceTicks.map((tick, i) => (
            <text key={tick} x="2435" y={286 + i * 80}>
              {tick}
            </text>
          ))}
          {lowerTicks.map((tick) => (
            <text key={tick.label} x="2435" y={tick.y + 9}>
              {tick.label}
            </text>
          ))}
        </g>
        <g fontSize="24" fontFamily="'Liberation Serif', 'Times New Roman', serif">
          {priceTags.map((tag) => (
            <g key={tag.label}>
              <rect x="2435" y={tag.y} width="100" height={tag.height} fill={tag.fill} />
              <text x="2435" y={tag.y + 22} fill="#fff">
                {tag.label}
              </text>
            </g>
          ))}
        </g>
        <g fontSize="24" fill="#666" clipPath="url(#plot)">
          {dates.map((date, i) => (
            <text key={date} x={dateX[i] + 6} y="1352">
              {date}
            </text>
          ))}
        </g>
      </svg>

      <div className="absolute left-[10px] top-[555px]">
        <IndicatorLabel name="SMA" params="(Close, 38)" />
        <IndicatorLabel name="SMA" params="(Close, 90)" />
        <IndicatorLabel name="SMA" params="(Close, 200)" />
      </div>
      <div className="absolute left-[10px] top-[655px]">
        <IndicatorLabel name="MACD" params="(Close, 9, 12, 26, Simple)" />
      </div>
      <div className="absolute left-[10px] top-[865px]">
        <IndicatorLabel name="RSI" params="(Close, 14)" />
      </div>
    </div>
  </div>
)

const App = () => {
  return (
    <div className="border-b-2 border-[#a0a0a0] bg-[#f7f7f7] font-['Liberation_Sans',Arial,sans-serif]">
      <Header />
      <main className="flex pb-[4px]">
        <Sidebar />
        <div className="flex w-[16px] shrink-0 items-center justify-center border-x-2 border-[#a8a8a8] bg-[#bfbfc4]">
          <div className="mb-[12px] h-[44px] w-[10px] bg-[repeating-linear-gradient(180deg,#808080_0_2px,transparent_2px_6px)]" />
        </div>
        <section className="ml-[4px] mr-[8px] min-w-0 flex-1">
          <TabBar />
          <Toolbar />
          <Chart />
        </section>
      </main>
    </div>
  )
}

export default App
